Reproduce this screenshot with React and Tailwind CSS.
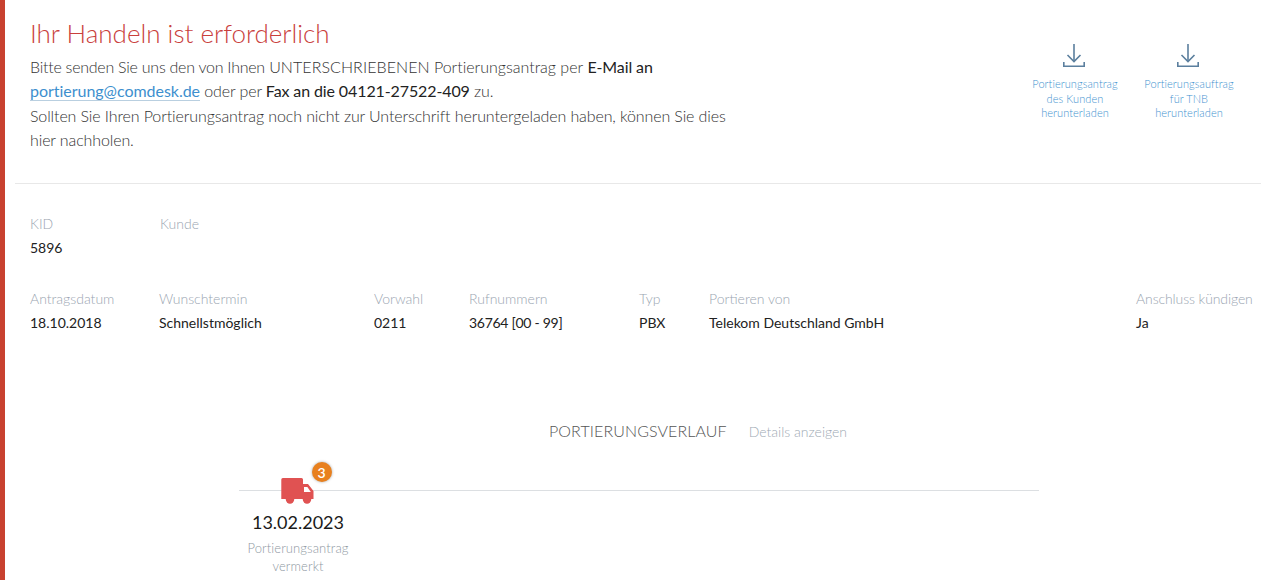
import React from 'react';

const DownloadIcon = () => (
  <svg width="22" height="24" viewBox="0 0 22 24" fill="none" stroke="#5b7f9e" strokeWidth="1.6" className="mr-[2px]">
    <path d="M11 0v17" />
    <path d="M4.5 11l6.5 6.5 6.5-6.5" />
    <path d="M.8 18v4.2h20.4V18" />
  </svg>
);

const TruckIcon = () => (
  <svg width="33" height="27" viewBox="0 0 33 27" className="block">
    <path d="M1.8 1H20.5a1.5 1.5 0 0 1 1.5 1.5V7H27L32.5 14V22H.3V2.5A1.5 1.5 0 0 1 1.8 1z" fill="#e05252" />
    <path d="M23 10h3.4l3.4 5H23z" fill="#fff" />
    <circle cx="9" cy="22.5" r="4.2" fill="#e05252" />
    <circle cx="26" cy="22.5" r="4.2" fill="#e05252" />
  </svg>
);

const DownloadLink = ({ width, lines }) => (
  <a className={`flex flex-col items-center ${width}`}>
    <DownloadIcon />
    <span className="mt-[9px] text-center text-[11px] leading-[14.5px] tracking-[0.08px] font-light text-[#3f93d0]">
      {lines.map((line) => (
        <span key={line} className="block whitespace-nowrap">{line}</span>
      ))}
    </span>
  </a>
);

const Field = ({ label, value, width }) => (
  <div className={`shrink-0 ${width}`}>
    <div className="text-[14px] leading-[20px] font-light text-[#9aa5b1] whitespace-nowrap">{label}</div>
    <div className="mt-[4px] text-[14px] leading-[20px] text-[#222] whitespace-nowrap">{value}</div>
  </div>
);

export default function App() {
  return (
    <div className="h-[580px] w-[1266px] overflow-hidden bg-white border-l-[5px] border-[#c8412f] font-['Lato',sans-serif]">
      {/* Header */}
      <div className="ml-[10px] mr-[5px] h-[184px] border-b border-[#e8e8e8] pl-[15px] flex justify-between">
        <div className="w-[710px] pt-[16px]">
          <h1 className="text-[26px] leading-[34px] font-light text-[#c9403c]">Ihr Handeln ist erforderlich</h1>
          <p className="mt-[5px] text-[16px] leading-[24.3px] tracking-[-0.11px] font-light text-[#333]">
            <span className="tracking-[-0.25px]">Bitte senden Sie uns den von Ihnen</span>{' '}
            <span className="tracking-[0.07px]">UNTERSCHRIEBENEN</span>{' '}
            <span className="tracking-[-0.01px]">Portierungsantrag per</span>{' '}
            <span className="font-normal text-[#222]">E-Mail an</span>{' '}
            <a className="font-normal tracking-[-0.03px] text-[#3d8fce] border-b border-[#b9cfe0]">portierung@comdesk.de</a> oder per <span className="font-normal text-[#222]">Fax an die 04121-27522-409</span> zu.
            <br />
            Sollten Sie Ihren Portierungsantrag noch nicht zur Unterschrift heruntergeladen haben, können Sie dies hier nachholen.
          </p>
        </div>
        <div className="flex pt-[44px] pr-[22px] gap-[14px]">
          <DownloadLink width="w-[100px]" lines={['Portierungsantrag', 'des Kunden', 'herunterladen']} />
          <DownloadLink width="w-[100px]" lines={['Portierungsauftrag', 'für TNB', 'herunterladen']} />
        </div>
      </div>

      {/* Details */}
      <div className="pl-[25px] pt-[30px]">
        <div className="flex">
          <Field width="w-[130px]" label="KID" value="5896" />
          <Field width="w-[200px]" label="Kunde" value="" />
        </div>
        <div className="flex mt-[31px]">
          <Field width="w-[129px]" label="Antragsdatum" value="18.10.2018" />
          <Field width="w-[215px]" label="Wunschtermin" value="Schnellstmöglich" />
          <Field width="w-[95px]" label="Vorwahl" value="0211" />
          <Field width="w-[170px]" label="Rufnummern" value={<span className="tracking-[-0.28px]">36764 [00 - 99]</span>} />
          <Field width="w-[70px]" label="Typ" value="PBX" />
          <Field width="w-[427px]" label="Portieren von" value="Telekom Deutschland GmbH" />
          <Field width="w-[120px]" label={<span className="tracking-[-0.1px]">Anschluss kündigen</span>} value="Ja" />
        </div>
      </div>

      {/* Verlauf */}
      <div className="mt-[86px] ml-[544px] flex items-baseline gap-[22px]">
        <span className="text-[16px] leading-[24px] tracking-[0.1px] font-light text-[#555]">PORTIERUNGSVERLAUF</span>
        <span className="text-[14px] font-light text-[#a0aab4]">Details anzeigen</span>
      </div>
      <div className="mt-[24px] ml-[234px] w-[800px] h-[100px] relative">
        <div className="absolute left-0 right-0 top-[23px] border-t border-[#dcdfe2]" />
        <div className="relative w-[118px] flex flex-col items-center">
          <div className="relative mt-[10px] h-[27px] -ml-[2px]">
            <TruckIcon />
            <span className="absolute -top-[15px] -right-[18px] w-[20px] h-[20px] rounded-full bg-[#e8801e] text-white text-[14px] font-semibold flex items-center justify-center shadow-[0_0_3px_rgba(0,0,0,0.35)]">3</span>
          </div>
          <div className="mt-[6px] text-[18px] leading-[24px] text-[#1a1a1a] whitespace-nowrap">13.02.2023</div>
          <div className="mt-[5px] text-center text-[13px] leading-[18px] tracking-[0.1px] font-light text-[#8f99a3] whitespace-nowrap">Portierungsantrag<br />vermerkt</div>
        </div>
      </div>
    </div>
  );
}
